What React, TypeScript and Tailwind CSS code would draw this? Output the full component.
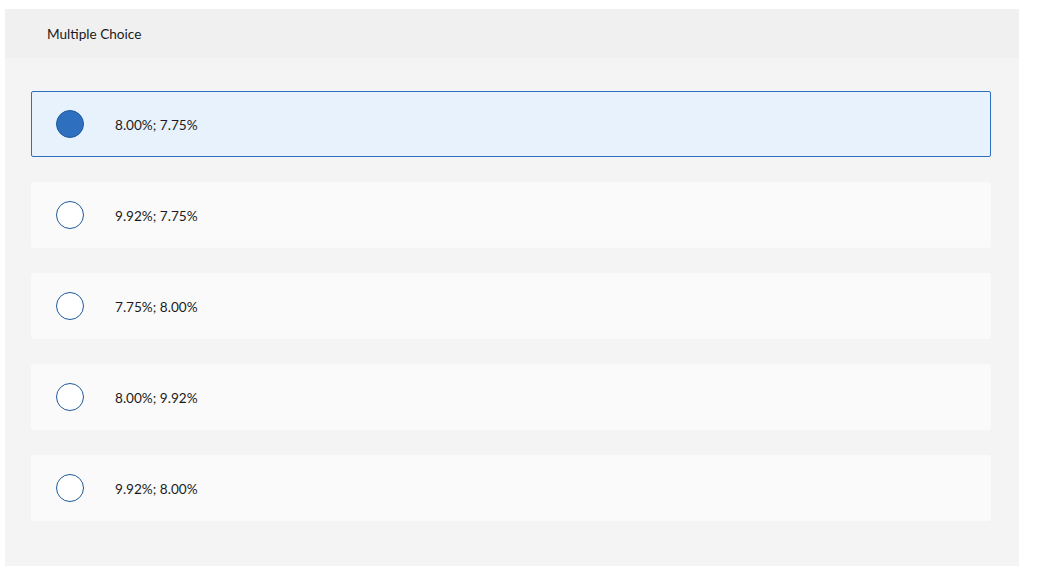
const options = [
  { label: "8.00%; 7.75%", selected: true },
  { label: "9.92%; 7.75%", selected: false },
  { label: "7.75%; 8.00%", selected: false },
  { label: "8.00%; 9.92%", selected: false },
  { label: "9.92%; 8.00%", selected: false },
];

function Radio({ selected }: { selected: boolean }) {
  return selected ? (
    <span className="block w-[28px] h-[28px] rounded-full bg-[#2f6fc0] border border-[#1f5a9a] shrink-0" />
  ) : (
    <span className="block w-[28px] h-[28px] rounded-full bg-white border-[1.5px] border-[#1f5a9a] shrink-0" />
  );
}

export default function App() {
  return (
    <div
      className="bg-white w-[1038px] h-[571px] pt-[9px] pl-[5px]"
      style={{ fontFamily: "Lato, 'Open Sans', sans-serif" }}
    >
      <div className="w-[1014px] h-[557px] bg-[#f4f4f4] flex flex-col">
        <div className="h-[49px] bg-[#f0f0f0] flex items-center pl-[42px] pt-[2px] text-[13.6px] text-[#1a1a1a]">
          Multiple Choice
        </div>
        <div className="flex flex-col gap-[25px] pt-[33px] pl-[26px] w-[986px]">
          {options.map((o) =>
            o.selected ? (
              <div
                key={o.label}
                className="h-[66px] flex items-center pl-[24px] rounded-[2px] border border-[#2e6fc4] bg-[#e8f2fc]"
              >
                <Radio selected />
                <span className="ml-[31px] pt-[2px] text-[13.6px] text-[#1a1a1a]">{o.label}</span>
              </div>
            ) : (
              <div
                key={o.label}
                className="h-[66px] flex items-center pl-[25px] rounded-[3px] bg-[#fafafa]"
              >
                <Radio selected={false} />
                <span className="ml-[31px] pt-[2px] text-[13.6px] text-[#1a1a1a]">{o.label}</span>
              </div>
            )
          )}
        </div>
      </div>
    </div>
  );
}
